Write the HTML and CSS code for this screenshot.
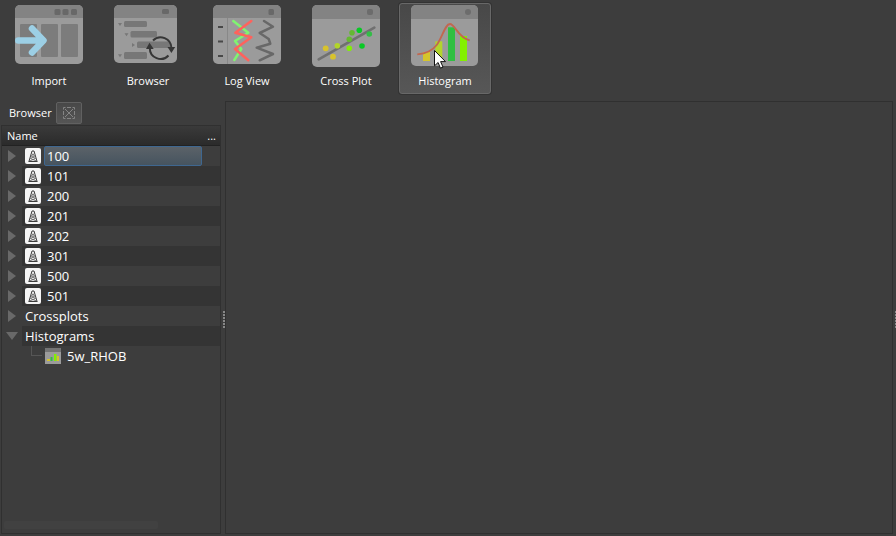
FILE: index.html
```
<!DOCTYPE html>
<html lang="en">
<head>
<meta charset="utf-8">
<title>Well Browser</title>
<link rel="stylesheet" href="styles.css">
</head>
<body>
<svg class="defs" aria-hidden="true">
  <symbol id="well" viewBox="0 0 16 16">
    <rect width="16" height="16" rx="2" fill="#f5f5f5"/>
    <path d="M7 3h2M7 3L4 13.300M9 3l3 10.300M3.500 13.500h9" fill="none" stroke="#3c3c3c"/>
    <path d="M6.500 5.500L9.800 8L5.500 10.500l6 2.500M9.500 5.500L6.200 8l4.300 2.500L4.500 13" fill="none" stroke="#555" stroke-width=".8"/>
  </symbol>
</svg>
<nav class="toolbar" aria-label="Tools">
  <button class="tool" type="button">
    <svg class="tool-icon" viewBox="0 0 68 62" aria-hidden="true">
      <rect width="68" height="59" rx="5" fill="#9b9b9b"/>
      <path d="M0 13V5a5 5 0 0 1 5-5h58a5 5 0 0 1 5 5v8z" fill="#838383"/>
      <g fill="#686868"><rect x="39.500" y="4" width="6" height="6" rx="1.500"/><rect x="47.500" y="4" width="6" height="6" rx="1.500"/><rect x="56" y="4" width="6" height="6" rx="1.500"/></g>
      <g fill="#7c7c7c"><rect x="5" y="19" width="17" height="33" rx="1"/><rect x="26" y="19" width="17" height="33" rx="1"/><rect x="46" y="19" width="17" height="33" rx="1"/></g>
      <path d="M3.300 35.500H27M17 23.500l11.500 12L17 47.500" fill="none" stroke="#9ccfe5" stroke-width="6.500" stroke-linecap="round" stroke-linejoin="round"/>
    </svg>
    <span>Import</span>
  </button>
  <button class="tool" type="button">
    <svg class="tool-icon" viewBox="0 0 68 62" aria-hidden="true">
      <rect width="63" height="58" rx="5" fill="#9b9b9b"/>
      <path d="M0 13V5a5 5 0 0 1 5-5h53a5 5 0 0 1 5 5v8z" fill="#838383"/>
      <rect x="48" y="4" width="7" height="5" rx="1.500" fill="#686868"/>
      <g fill="#777"><rect x="10" y="16" width="23" height="6" rx="1.500"/><rect x="16.500" y="26" width="26.500" height="6.500" rx="1.500"/><rect x="23" y="36.500" width="33" height="6.500" rx="1.500"/><rect x="10" y="47" width="23" height="7" rx="1.500"/>
      <path d="M4 18h4l-2 3zM10.500 28.300h4l-2 3zM18 38l3 2-3 2zM4 49.300h4l-2 3z"/></g>
      <path d="M39 35.500A10.800 10.800 0 0 1 57.400 43M54.500 50.500A10.800 10.800 0 0 1 35.800 43" fill="none" stroke="#363636" stroke-width="2"/>
      <path d="M53.500 42h7.700l-3.800 6zM32 44h7.700l-4.200-6.300z" fill="#363636"/>
    </svg>
    <span>Browser</span>
  </button>
  <button class="tool" type="button">
    <svg class="tool-icon" viewBox="0 0 68 62" aria-hidden="true">
      <rect width="68" height="59" rx="5" fill="#9b9b9b"/>
      <path d="M0 13V5a5 5 0 0 1 5-5h58a5 5 0 0 1 5 5v8z" fill="#838383"/>
      <rect x="55.500" y="4" width="5.500" height="6" rx="1.500" fill="#686868"/>
      <path d="M14.500 13v46" stroke="#888"/>
      <path d="M5 22h5M5 36.500h5M5 51h5" stroke="#484848" stroke-width="1.800"/>
      <g fill="none" stroke-width="2.500" stroke-linecap="round" stroke-linejoin="round">
        <path d="M20.300 16l15 11.700L22 36l6.300 8-7 11" stroke="#80f470"/>
        <path d="M38.300 16l-16 11.700 16 4.600L22 44l13.300 11.300" stroke="#ff625c"/>
        <path d="M51 16l9 5.700L46.700 28l9 6 1.600 4.700-13.600 4L60 49l-13.300 6.300" stroke="#686868"/>
      </g>
    </svg>
    <span>Log View</span>
  </button>
  <button class="tool" type="button">
    <svg class="tool-icon" viewBox="0 0 68 62" aria-hidden="true">
      <rect width="68" height="62" rx="5" fill="#9b9b9b"/>
      <path d="M0 14V5a5 5 0 0 1 5-5h58a5 5 0 0 1 5 5v9z" fill="#838383"/>
      <rect x="55" y="4" width="6" height="6" rx="2" fill="#6c6c6c"/>
      <path d="M6.700 54.300L62.300 22.700" stroke="#707070" stroke-width="2.700" stroke-linecap="round"/>
      <g fill="#d8c32c"><circle cx="13.700" cy="43.300" r="2.900"/><circle cx="21" cy="51.700" r="2.900"/></g>
      <circle cx="25.300" cy="40.700" r="2.800" fill="#b2d52a"/>
      <circle cx="37.300" cy="43.300" r="2.800" fill="#83ee08"/>
      <g fill="#65b832"><circle cx="37.300" cy="34.300" r="2.800"/><circle cx="40" cy="27.700" r="2.800"/></g>
      <g fill="#08ca25"><circle cx="47.300" cy="25.300" r="2.800"/><circle cx="50" cy="41" r="2.800"/></g>
      <circle cx="57.300" cy="29" r="2.800" fill="#32bd46"/>
    </svg>
    <span>Cross Plot</span>
  </button>
  <button class="tool tool-hover" type="button">
    <svg class="tool-icon" viewBox="0 0 68 62" aria-hidden="true">
      <rect width="67" height="61" rx="5" fill="#9b9b9b"/>
      <path d="M0 14V5a5 5 0 0 1 5-5h57a5 5 0 0 1 5 5v9z" fill="#838383"/>
      <circle cx="57" cy="7" r="3" fill="#6c6c6c"/>
      <rect x="12" y="47" width="7" height="9" fill="#d5c52c"/>
      <rect x="24.300" y="36.300" width="7" height="19.700" fill="#b2d52c"/>
      <rect x="37" y="22.300" width="7" height="33.700" fill="#30bf42"/>
      <rect x="49" y="31" width="7" height="25" fill="#83f000"/>
      <path d="M6.300 49.300C13 48.800 20 47.500 25.700 40S34 19 39 19s8 14 19.700 16.300" fill="none" stroke="#c2674f" stroke-width="1.800"/>
    </svg>
    <span>Histogram</span>
    <svg class="cursor" viewBox="0 0 12 19" aria-hidden="true">
      <path d="M.5.500v15.300l3.600-3.300 2.300 5.600 2.600-1-2.400-5.500h4.900z" fill="#fff" stroke="#111"/>
    </svg>
  </button>
</nav>
<main class="workspace">
  <section class="side" aria-label="Browser">
    <div class="tabs">
      <h1 class="tab-title">Browser</h1>
      <button class="tab-close" type="button" aria-label="Close">
        <svg viewBox="0 0 12 12" aria-hidden="true"><path d="M2 2l8 8M10 2L2 10M4 .5h4M4 11.500h4M.5 4v4M11.500 4v4M.5 2.500v-2h2M9.500.5h2v2M11.500 9.500v2h-2M2.500 11.500h-2v-2" fill="none" stroke="#858585"/></svg>
      </button>
    </div>
    <div class="panel">
      <div class="panel-head"><span>Name</span><span>...</span></div>
      <ul class="tree">
        <li class="row"><button class="toggle" type="button" aria-label="Expand 100"></button><div class="item"><svg class="well"><use href="#well"/></svg><span class="name selected">100</span></div></li>
        <li class="row"><button class="toggle" type="button" aria-label="Expand 101"></button><div class="item"><svg class="well"><use href="#well"/></svg><span class="name">101</span></div></li>
        <li class="row"><button class="toggle" type="button" aria-label="Expand 200"></button><div class="item"><svg class="well"><use href="#well"/></svg><span class="name">200</span></div></li>
        <li class="row"><button class="toggle" type="button" aria-label="Expand 201"></button><div class="item"><svg class="well"><use href="#well"/></svg><span class="name">201</span></div></li>
        <li class="row"><button class="toggle" type="button" aria-label="Expand 202"></button><div class="item"><svg class="well"><use href="#well"/></svg><span class="name">202</span></div></li>
        <li class="row"><button class="toggle" type="button" aria-label="Expand 301"></button><div class="item"><svg class="well"><use href="#well"/></svg><span class="name">301</span></div></li>
        <li class="row"><button class="toggle" type="button" aria-label="Expand 500"></button><div class="item"><svg class="well"><use href="#well"/></svg><span class="name">500</span></div></li>
        <li class="row"><button class="toggle" type="button" aria-label="Expand 501"></button><div class="item"><svg class="well"><use href="#well"/></svg><span class="name">501</span></div></li>
        <li class="row"><button class="toggle" type="button" aria-label="Expand Crossplots"></button><div class="item">Crossplots</div></li>
        <li class="row"><button class="toggle open" type="button" aria-label="Collapse Histograms"></button><div class="item">Histograms</div></li>
        <li class="row child">
          <span class="branch"></span>
          <svg class="plot" viewBox="0 0 16 16" aria-hidden="true"><rect width="16" height="16" fill="#9b9b9b"/><rect width="16" height="4" fill="#747474"/><path d="M2 11h3v2H2z" fill="#d5c52c"/><path d="M5.500 9h2v4h-2z" fill="#30bf42"/><path d="M9 6h2.500v7H9z" fill="#83f000"/><path d="M12 8h2v5h-2z" fill="#d5c52c"/></svg>
          <span class="name">5w_RHOB</span>
        </li>
      </ul>
      <div class="scroll"></div>
    </div>
  </section>
  <div class="splitter"><span class="grip"></span></div>
  <section class="canvas" aria-label="Plot area"></section>
  <div class="splitter edge"><span class="grip"></span></div>
</main>
</body>
</html>
```
FILE: styles.css
```
* { box-sizing: border-box; }

body {
  display: flex;
  flex-direction: column;
  min-height: 100vh;
  margin: 0;
  background: #3d3d3d;
  color: #fff;
  font: 11px/16px "Open Sans", "Noto Sans", sans-serif;
}

button {
  margin: 0;
  padding: 0;
  border: 0;
  background: none;
  color: inherit;
  font: inherit;
}

.defs { display: block; width: 0; height: 0; }

.toolbar {
  display: flex;
  gap: 7px;
  padding: 3px 3px 0;
}

.tool {
  position: relative;
  display: flex;
  flex-direction: column;
  align-items: center;
  gap: 6px;
  width: 92px;
  height: 91px;
  padding-top: 1px;
  border: 1px solid transparent;
  border-radius: 3px;
}

.tool-hover {
  border-color: #686868;
  background: linear-gradient(#484848, #575757);
  box-shadow: 0 0 0 1px #333;
}

.tool-icon { flex: none; width: 68px; height: 62px; }

.cursor {
  position: absolute;
  top: 46px;
  left: 34px;
  width: 12px;
  height: 19px;
}

.workspace {
  display: flex;
  flex: 1;
  padding: 7px 0 2px 1px;
}

.side {
  display: flex;
  flex-direction: column;
  width: 220px;
}

.tabs {
  display: flex;
  align-items: center;
  gap: 4px;
  height: 24px;
  padding-left: 8px;
}

.tab-title { margin: 0; font: inherit; }

.tab-close {
  display: grid;
  place-items: center;
  width: 26px;
  height: 22px;
  border: 1px solid #616161;
  border-radius: 2px;
  background: linear-gradient(#484848, #555);
}

.tab-close svg { width: 12px; height: 12px; }

.panel {
  display: flex;
  flex: 1;
  flex-direction: column;
  border: 1px solid #303030;
}

.panel-head {
  display: flex;
  justify-content: space-between;
  height: 20px;
  padding: 2px 4px 0 5px;
  border-bottom: 1px solid #222;
  background: linear-gradient(#3a3a3a, #2b2b2b);
}

.tree {
  flex: 1;
  margin: 0;
  padding: 0;
  list-style: none;
  font-size: 13px;
  line-height: 20px;
}

.row { display: flex; height: 20px; }

.toggle {
  display: flex;
  align-items: center;
  width: 20px;
  padding-left: 6px;
}

.toggle::before {
  content: "";
  border: 6px solid transparent;
  border-right: 0;
  border-left: 8px solid #696969;
}

.toggle.open { padding-left: 4px; }

.toggle.open::before {
  border: 6px solid transparent;
  border-top: 8px solid #696969;
  border-bottom: 0;
}

.item {
  display: flex;
  flex: 1;
  align-items: center;
  gap: 3px;
  padding-left: 3px;
}

.row:nth-child(even) .item { background: #343434; }

.well, .plot { flex: none; width: 16px; height: 16px; }

.item .name {
  width: 158px;
  padding-left: 3px;
}

.item .selected {
  border: 1px solid #3f6790;
  border-radius: 2px;
  padding-left: 2px;
  background: linear-gradient(#5b6268, #46545f);
  line-height: 18px;
}

.child { align-items: center; padding-left: 29px; }

.child .name { padding-left: 6px; }

.branch {
  align-self: flex-start;
  width: 11px;
  height: 10px;
  margin-right: 3px;
  border: solid #565656;
  border-width: 0 0 1px 1px;
}

.scroll {
  width: 154px;
  height: 8px;
  margin: 0 0 4px 2px;
  border-radius: 2px;
  background: #414141;
}

.splitter {
  display: flex;
  align-items: center;
  justify-content: flex-end;
  width: 4px;
  padding-top: 4px;
}

.edge { width: 3px; }

.grip {
  width: 2px;
  height: 17px;
  background: repeating-linear-gradient(#888 0 2px, transparent 2px 3px);
}

.edge .grip { width: 1px; }

.canvas {
  flex: 1;
  border: 1px solid #303030;
}
```
